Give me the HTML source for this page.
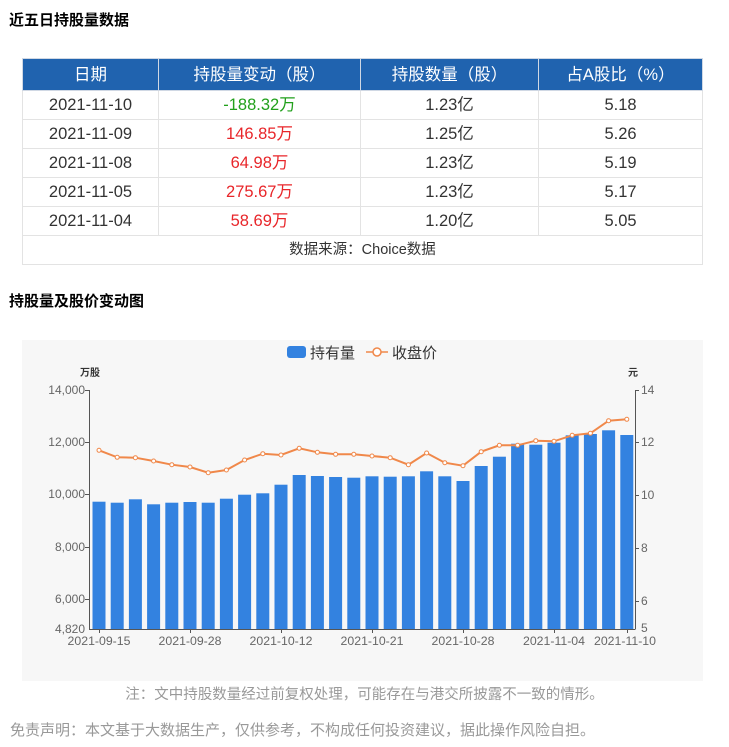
<!DOCTYPE html>
<html><head><meta charset="utf-8"><style>
body{margin:0;background:#fff;font-family:"Liberation Sans","Noto Sans CJK SC",sans-serif;width:729px;height:747px;position:relative;overflow:hidden}
.t{position:absolute;left:9px;font-weight:bold;font-size:15px;color:#000}
table{position:absolute;left:22px;top:58px;width:681px;border-collapse:collapse;font-size:16.5px;color:#333;table-layout:fixed}
td,th{border:1px solid #e3e3e3;text-align:center;height:28px;padding:0;line-height:28px}
th{background:#2063af;color:#fff;font-weight:normal;height:31px;border-color:#d0d8e4;font-size:16.5px}
.g{color:#22a01c}.r{color:#e8262a}
.note{position:absolute;left:0;width:729px;text-align:center;top:683px;font-size:14.5px;color:#999}
.dis{position:absolute;left:10px;top:719px;font-size:15px;color:#999}
</style></head><body>
<div class="t" style="top:9px">近五日持股量数据</div>
<table>
<tr><th style="width:135px">日期</th><th style="width:201px">持股量变动（股）</th><th style="width:177px">持股数量（股）</th><th>占A股比（%）</th></tr>
<tr><td>2021-11-10</td><td class="g">-188.32万</td><td>1.23亿</td><td>5.18</td></tr>
<tr><td>2021-11-09</td><td class="r">146.85万</td><td>1.25亿</td><td>5.26</td></tr>
<tr><td>2021-11-08</td><td class="r">64.98万</td><td>1.23亿</td><td>5.19</td></tr>
<tr><td>2021-11-05</td><td class="r">275.67万</td><td>1.23亿</td><td>5.17</td></tr>
<tr><td>2021-11-04</td><td class="r">58.69万</td><td>1.20亿</td><td>5.05</td></tr>
<tr><td colspan="4" style="font-size:14.5px">数据来源：Choice数据</td></tr>
</table>
<div class="t" style="top:290px">持股量及股价变动图</div>
<svg style="position:absolute;left:0;top:0" width="729" height="747" font-family="Liberation Sans,Noto Sans CJK SC,sans-serif">
<rect x="22" y="340" width="681" height="341" fill="#f7f7f7"/>
<rect x="287" y="346" width="19" height="12" rx="3" fill="#3382e0"/>
<text x="310" y="358" font-size="15" fill="#333">持有量</text>
<line x1="366" y1="352" x2="388" y2="352" stroke="#f0884a" stroke-width="1.5"/>
<circle cx="377" cy="352" r="4" fill="#fff" stroke="#f0884a" stroke-width="1.5"/>
<text x="392" y="358" font-size="15" fill="#333">收盘价</text>
<text x="80" y="376" font-size="10" font-weight="bold" fill="#333">万股</text>
<text x="628" y="376" font-size="10" font-weight="bold" fill="#333">元</text>
<g fill="#666" font-size="12" text-anchor="end">
<text x="85" y="394">14,000</text><text x="85" y="446">12,000</text><text x="85" y="498">10,000</text><text x="85" y="551">8,000</text><text x="85" y="603">6,000</text><text x="85" y="633">4,820</text></g>
<g fill="#666" font-size="12">
<text x="641" y="394">14</text><text x="641" y="446">12</text><text x="641" y="499">10</text><text x="641" y="552">8</text><text x="641" y="605">6</text><text x="641" y="632">5</text></g>
<g fill="#3382e0">
<rect x="92.5" y="501.7" width="13" height="127.3"/><rect x="110.7" y="502.7" width="13" height="126.3"/><rect x="128.9" y="499.3" width="13" height="129.7"/><rect x="147.1" y="504.3" width="13" height="124.7"/><rect x="165.3" y="502.7" width="13" height="126.3"/><rect x="183.5" y="502" width="13" height="127"/><rect x="201.7" y="502.7" width="13" height="126.3"/><rect x="219.9" y="498.7" width="13" height="130.3"/><rect x="238.1" y="494.7" width="13" height="134.3"/><rect x="256.3" y="493.3" width="13" height="135.7"/><rect x="274.5" y="484.7" width="13" height="144.3"/><rect x="292.7" y="475" width="13" height="154"/><rect x="310.9" y="476" width="13" height="153"/><rect x="329.1" y="477" width="13" height="152"/><rect x="347.3" y="477.7" width="13" height="151.3"/><rect x="365.5" y="476.3" width="13" height="152.7"/><rect x="383.7" y="476.7" width="13" height="152.3"/><rect x="401.9" y="476.3" width="13" height="152.7"/><rect x="420.1" y="471.3" width="13" height="157.7"/><rect x="438.3" y="476.3" width="13" height="152.7"/><rect x="456.5" y="481" width="13" height="148"/><rect x="474.7" y="466" width="13" height="163"/><rect x="492.9" y="456.7" width="13" height="172.3"/><rect x="511.1" y="443.7" width="13" height="185.3"/><rect x="529.3" y="444.7" width="13" height="184.3"/><rect x="547.5" y="442.7" width="13" height="186.3"/><rect x="565.7" y="435.3" width="13" height="193.7"/><rect x="583.9" y="434" width="13" height="195"/><rect x="602.1" y="430.3" width="13" height="198.7"/><rect x="620.3" y="435" width="13" height="194"/>
</g>
<g stroke="#555" stroke-width="1" fill="none">
<path d="M89.5 390V629.5H635M635.5 390V629.5"/>
<path d="M85 390.5h4.5M85 442.5h4.5M85 494.5h4.5M85 547.5h4.5M85 599.5h4.5M635 390.5h4M635 442.5h4M635 495.5h4M635 548.5h4M635 601.5h4"/>
<path d="M99.5 629v4M190.5 629v4M281.5 629v4M372.5 629v4M463.5 629v4M554.5 629v4M627.5 629v4"/>
</g>
<polyline fill="none" stroke="#f0884a" stroke-width="2" points="99,450.3 117.2,457.3 135.4,457.7 153.6,461 171.8,464.7 190,467 208.2,472.7 226.4,470 244.6,460 262.8,453.7 281,455 299.2,448.3 317.4,452.3 335.6,454.3 353.8,454.3 372,456 390.2,457.7 408.4,464.7 426.6,453 444.8,462.7 463,465.7 481.2,451.7 499.4,445.3 517.6,445.3 535.8,440.7 554,441.3 572.2,435.3 590.4,433.3 608.6,420.7 626.8,419.3"/>
<g fill="#fff" stroke="#f0884a" stroke-width="1">
<circle cx="99" cy="450.3" r="2"/><circle cx="117.2" cy="457.3" r="2"/><circle cx="135.4" cy="457.7" r="2"/><circle cx="153.6" cy="461" r="2"/><circle cx="171.8" cy="464.7" r="2"/><circle cx="190" cy="467" r="2"/><circle cx="208.2" cy="472.7" r="2"/><circle cx="226.4" cy="470" r="2"/><circle cx="244.6" cy="460" r="2"/><circle cx="262.8" cy="453.7" r="2"/><circle cx="281" cy="455" r="2"/><circle cx="299.2" cy="448.3" r="2"/><circle cx="317.4" cy="452.3" r="2"/><circle cx="335.6" cy="454.3" r="2"/><circle cx="353.8" cy="454.3" r="2"/><circle cx="372" cy="456" r="2"/><circle cx="390.2" cy="457.7" r="2"/><circle cx="408.4" cy="464.7" r="2"/><circle cx="426.6" cy="453" r="2"/><circle cx="444.8" cy="462.7" r="2"/><circle cx="463" cy="465.7" r="2"/><circle cx="481.2" cy="451.7" r="2"/><circle cx="499.4" cy="445.3" r="2"/><circle cx="517.6" cy="445.3" r="2"/><circle cx="535.8" cy="440.7" r="2"/><circle cx="554" cy="441.3" r="2"/><circle cx="572.2" cy="435.3" r="2"/><circle cx="590.4" cy="433.3" r="2"/><circle cx="608.6" cy="420.7" r="2"/><circle cx="626.8" cy="419.3" r="2"/>
</g>
<g fill="#666" font-size="12.3" text-anchor="middle">
<text x="99" y="645">2021-09-15</text><text x="190" y="645">2021-09-28</text><text x="281" y="645">2021-10-12</text><text x="372" y="645">2021-10-21</text><text x="463" y="645">2021-10-28</text><text x="554" y="645">2021-11-04</text><text x="625" y="645">2021-11-10</text></g>
</svg>
<div class="note">注：文中持股数量经过前复权处理，可能存在与港交所披露不一致的情形。</div>
<div class="dis">免责声明：本文基于大数据生产，仅供参考，不构成任何投资建议，据此操作风险自担。</div>
</body></html>
